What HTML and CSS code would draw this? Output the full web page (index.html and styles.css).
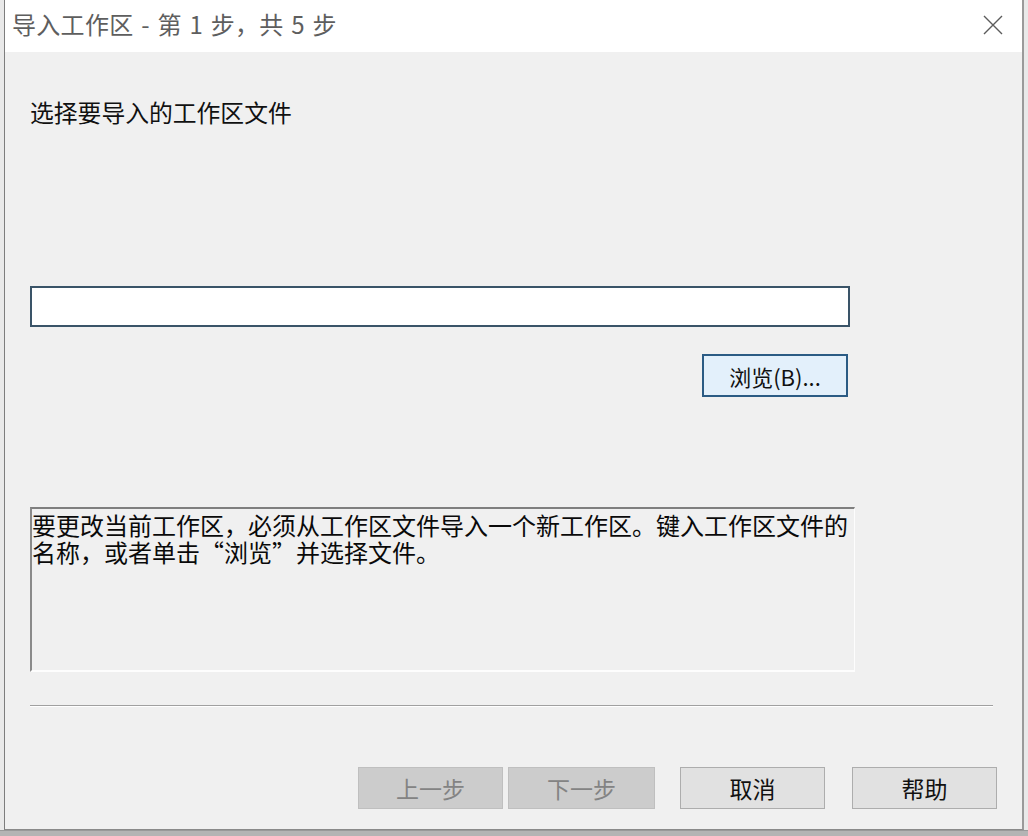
FILE: index.html
```html
<!DOCTYPE html>
<html lang="zh-CN">
<head>
  <meta charset="UTF-8">
  <title>导入工作区</title>
  <link rel="stylesheet" href="styles.css">
</head>
<body>

  <div class="dialog">
    <!-- Title bar -->
    <div class="titlebar">
      <span class="title">导入工作区 - 第 1 步，共 5 步</span>
      <svg class="close" width="20" height="20" viewBox="0 0 20 20">
        <path d="M1 1 L19 19 M19 1 L1 19" stroke="#5c5c5c" stroke-width="1.4" fill="none"/>
      </svg>
    </div>

    <!-- Wizard page -->
    <div class="content">
      <h1 class="heading">选择要导入的工作区文件</h1>

      <input type="text" class="path-input">

      <div class="browse-row">
        <button class="browse-btn">浏览(B)...</button>
      </div>

      <div class="desc">要更改当前工作区，必须从工作区文件导入一个新工作区。键入工作区文件的<br>名称，或者单击“浏览”并选择文件。</div>

      <div class="separator"></div>

      <div class="buttons">
        <div class="pair">
          <button class="btn" disabled>上一步</button>
          <button class="btn wide" disabled>下一步</button>
        </div>
        <button class="btn">取消</button>
        <button class="btn">帮助</button>
      </div>
    </div>
  </div>

  <div class="behind"></div>

</body>
</html>
```

FILE: styles.css
```css
* {
  margin: 0;
  padding: 0;
  box-sizing: border-box;
}

body {
  font-family: "Noto Sans CJK SC", "Noto Sans", sans-serif;
  background: #e9e9e9;
  width: 1028px;
  height: 836px;
  overflow: hidden;
}

/* Dialog window */
.dialog {
  margin-left: 4px;
  width: 1020px;
  height: 830px;
  background: #f0f0f0;
  border-left: 1px solid #7d7d7d;
  border-right: 2px solid #9a9a9a;
  border-bottom: 1px solid #8a8a8a;
  display: flex;
  flex-direction: column;
}

.titlebar {
  height: 52px;
  background: #fff;
  display: flex;
  align-items: center;
  justify-content: space-between;
  padding: 0 19px 0 7px;
  flex-shrink: 0;
}

.title {
  font-size: 24px;
  line-height: 28px;
  color: #5e5e5e;
  letter-spacing: 0.3px;
  word-spacing: 2px;
  margin-top: -4px;
}

.close {
  display: block;
  margin-top: -2px;
}

/* Page body */
.content {
  flex: 1;
  padding: 0 25px 0 25px;
  display: flex;
  flex-direction: column;
}

.heading {
  font-weight: normal;
  font-size: 23.8px;
  line-height: 28px;
  color: #111;
  margin-top: 46px;
}

.path-input {
  margin-top: 160px;
  width: 820px;
  height: 41px;
  border: 2px solid #3a5468;
  background: #fff;
  outline: none;
}

.browse-row {
  width: 818px;
  display: flex;
  justify-content: flex-end;
  margin-top: 27px;
}

.browse-btn {
  width: 146px;
  height: 43px;
  border: 2px solid #2b5b84;
  background: #e3f0fb;
  font-family: inherit;
  font-size: 22px;
  line-height: 26px;
  color: #111;
}

.desc {
  margin-top: 110px;
  width: 825px;
  height: 165px;
  border-top: 2px solid #7f7f7f;
  border-left: 2px solid #8a8a8a;
  border-right: 1px solid #fdfdfd;
  border-bottom: 2px solid #fdfdfd;
  padding: 2px 0 0 0;
  font-size: 24px;
  line-height: 27px;
  color: #0a0a0a;
  white-space: nowrap;
}

.separator {
  margin-top: 33px;
  width: 963px;
  height: 2px;
  border-top: 1px solid #a0a0a0;
  border-bottom: 1px solid #fff;
}

/* Bottom buttons */
.buttons {
  margin-top: 60px;
  display: flex;
  justify-content: flex-end;
  gap: 27px;
}

.pair {
  display: flex;
  gap: 5px;
  margin-right: -2px;
}

.btn {
  width: 145px;
  height: 42px;
  border: 1px solid #adadad;
  background: #e1e1e1;
  font-family: inherit;
  font-size: 23px;
  line-height: 26px;
  color: #111;
}

.btn.wide {
  width: 147px;
}

.btn:disabled {
  background: #cccccc;
  border-color: #bfbfbf;
  color: #838383;
}

/* Window behind the dialog */
.behind {
  height: 6px;
  background: #b4b4b4;
  border-top: 1px solid #999;
}
```
